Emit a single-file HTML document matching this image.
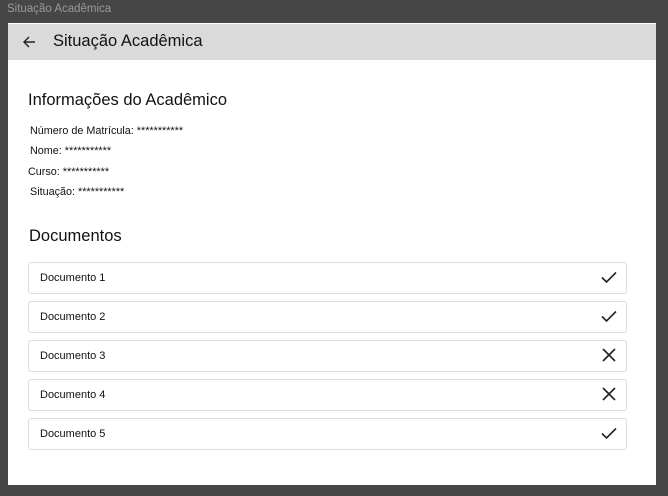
<!DOCTYPE html>
<html><head><meta charset="utf-8"><style>
*{margin:0;padding:0;box-sizing:border-box}
body{width:668px;height:496px;background:#464646;font-family:"Liberation Sans",sans-serif;position:relative;overflow:hidden}
.tt{position:absolute;left:7px;top:3px;font-size:11.5px;color:#9a9a9a}
.panel{position:absolute;left:8px;top:23px;width:648px;height:462px;background:#fff}
.hdr{position:absolute;left:0;top:1px;width:648px;height:36px;background:#dadada}
.hdr .t{position:absolute;left:45px;top:8px;font-size:16.5px;color:#111}
.hdr svg{position:absolute;left:14px;top:11px}
h2{position:absolute;font-size:16.5px;font-weight:normal;color:#111}
.l{position:absolute;font-size:10.8px;color:#111}
.row{position:absolute;left:20px;width:599px;height:32px;border:1px solid #ddd;border-radius:3px}
.row span{position:absolute;left:11px;top:9px;font-size:11px;color:#111}
.row svg{position:absolute;left:571px;top:5px}
</style></head><body>
<div class="tt">Situação Acadêmica</div>
<div class="panel">
<div class="hdr"><svg width="14" height="14" viewBox="0 0 14 14"><path d="M13 7H2M7 2L2 7l5 5" stroke="#222" stroke-width="1.4" fill="none"/></svg><div class="t">Situação Acadêmica</div></div>
<h2 style="left:20px;top:68px">Informações do Acadêmico</h2>
<div class="l" style="left:22px;top:102px">Número de Matrícula: ***********</div>
<div class="l" style="left:22px;top:122px">Nome: ***********</div>
<div class="l" style="left:20px;top:143px">Curso: ***********</div>
<div class="l" style="left:22px;top:163px">Situação: ***********</div>
<h2 style="left:21px;top:204px">Documentos</h2>
<div class="row" style="top:239px"><span>Documento 1</span><svg width="18" height="18" viewBox="0 0 18 18"><path d="M2 9.5l4.5 4.5L16 4.5" stroke="#222" stroke-width="1.6" fill="none"/></svg></div>
<div class="row" style="top:278px"><span>Documento 2</span><svg width="18" height="18" viewBox="0 0 18 18"><path d="M2 9.5l4.5 4.5L16 4.5" stroke="#222" stroke-width="1.6" fill="none"/></svg></div>
<div class="row" style="top:317px"><span>Documento 3</span><svg width="18" height="18" viewBox="0 0 18 18"><path d="M3 3l12 12M15 3L3 15" stroke="#222" stroke-width="1.6" fill="none"/></svg></div>
<div class="row" style="top:356px"><span>Documento 4</span><svg width="18" height="18" viewBox="0 0 18 18"><path d="M3 3l12 12M15 3L3 15" stroke="#222" stroke-width="1.6" fill="none"/></svg></div>
<div class="row" style="top:395px"><span>Documento 5</span><svg width="18" height="18" viewBox="0 0 18 18"><path d="M2 9.5l4.5 4.5L16 4.5" stroke="#222" stroke-width="1.6" fill="none"/></svg></div>
</div>
</body></html>
